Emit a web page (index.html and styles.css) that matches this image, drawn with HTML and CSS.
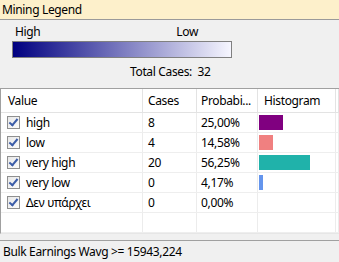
FILE: index.html
```html
<!DOCTYPE html>
<html>
<head>
  <link rel="stylesheet" href="styles.css">
</head>
<body>
  <div class="window">
    <div class="title">Mining Legend</div>

    <div class="legend">
      <div class="scale-labels">
        <span>High</span>
        <span>Low</span>
      </div>
      <div class="scale-bar"></div>
      <div class="total">Total Cases:&nbsp; 32</div>
    </div>

    <div class="grid">
      <div class="row head">
        <div class="cell c-value">Value</div>
        <div class="cell c-cases">Cases</div>
        <div class="cell c-prob">Probabi...</div>
        <div class="cell c-hist">Histogram</div>
        <div class="cell c-rest"></div>
      </div>
      <div class="row">
        <div class="cell c-value"><span class="check"></span>high</div>
        <div class="cell c-cases">8</div>
        <div class="cell c-prob">25,00%</div>
        <div class="cell c-hist"><span class="bar" style="width: 24px; background: #800080;"></span></div>
        <div class="cell c-rest"></div>
      </div>
      <div class="row">
        <div class="cell c-value"><span class="check"></span>low</div>
        <div class="cell c-cases">4</div>
        <div class="cell c-prob">14,58%</div>
        <div class="cell c-hist"><span class="bar" style="width: 14px; background: #f08080;"></span></div>
        <div class="cell c-rest"></div>
      </div>
      <div class="row">
        <div class="cell c-value"><span class="check"></span>very high</div>
        <div class="cell c-cases">20</div>
        <div class="cell c-prob">56,25%</div>
        <div class="cell c-hist"><span class="bar" style="width: 51px; background: #20b2aa;"></span></div>
        <div class="cell c-rest"></div>
      </div>
      <div class="row">
        <div class="cell c-value"><span class="check"></span>very low</div>
        <div class="cell c-cases">0</div>
        <div class="cell c-prob">4,17%</div>
        <div class="cell c-hist"><span class="bar" style="width: 4px; background: #6495ed;"></span></div>
        <div class="cell c-rest"></div>
      </div>
      <div class="row">
        <div class="cell c-value"><span class="check"></span>Δεν υπάρχει</div>
        <div class="cell c-cases">0</div>
        <div class="cell c-prob">0,00%</div>
        <div class="cell c-hist"></div>
        <div class="cell c-rest"></div>
      </div>
      <div class="row">
        <div class="cell c-value"></div>
        <div class="cell c-cases"></div>
        <div class="cell c-prob"></div>
        <div class="cell c-hist"></div>
        <div class="cell c-rest"></div>
      </div>
      <div class="row short">
        <div class="cell c-value"></div>
        <div class="cell c-cases"></div>
        <div class="cell c-prob"></div>
        <div class="cell c-hist"></div>
        <div class="cell c-rest"></div>
      </div>
    </div>

    <div class="status">Bulk Earnings Wavg &gt;= 15943,224</div>
  </div>
</body>
</html>
```

FILE: styles.css
```css
body {
  margin: 0;
  font-family: "Noto Sans", "Liberation Sans", sans-serif;
  font-size: 12px;
  letter-spacing: -0.35px;
  color: #000;
  background-color: #f0f0f0;
}

.window {
  width: 339px;
  height: 262px;
  display: flex;
  flex-direction: column;
  overflow: hidden;
}

.title {
  height: 20px;
  line-height: 19px;
  padding-left: 2px;
  background-color: #fdf0cb;
  border-bottom: 1px solid #9a9a9a;
  box-sizing: border-box;
}

.legend {
  height: 68px;
  padding: 4px 0 0 12px;
  box-sizing: border-box;
}

.scale-labels {
  display: flex;
  justify-content: space-between;
  width: 183px;
  padding-left: 3px;
  line-height: 16px;
}

.scale-bar {
  width: 218px;
  height: 15px;
  margin-top: 1px;
  border: 1px solid #808080;
  background: linear-gradient(to right, #000080, #f6f6ff);
}

.total {
  margin-top: 6px;
  padding-left: 118px;
  line-height: 16px;
}

.grid {
  height: 146px;
  background-color: #fff;
  border-top: 1px solid #a0a0a0;
  border-left: 1px solid #a0a0a0;
  border-bottom: 1px solid #e6e6e6;
  box-sizing: border-box;
  overflow: hidden;
}

.row {
  display: flex;
  height: 19px;
  border-bottom: 1px solid #eeeeee;
}

.row.head {
  height: 23px;
  border-bottom: 1px solid #e3e3e3;
}

.row.short {
  border-bottom: none;
}

.cell {
  display: flex;
  align-items: center;
  height: 100%;
  box-sizing: border-box;
  border-right: 1px solid #ececec;
  white-space: nowrap;
}

.head .cell {
  border-right-color: #e3e3e3;
}

.c-value {
  width: 142px;
  padding-left: 6px;
}

.head .c-value {
  padding-left: 7px;
}

.c-cases {
  width: 54px;
  padding-left: 5px;
}

.c-prob {
  width: 61px;
  padding-left: 4px;
}

.c-hist {
  width: 78px;
  padding-left: 1px;
}

.head .c-hist {
  padding-left: 6px;
}

.c-rest {
  flex: 1;
}

.check {
  width: 11px;
  height: 11px;
  margin-right: 6px;
  border: 1px solid #8f8f8f;
  background: linear-gradient(135deg, #e8e8e8, #fbfbfb);
  position: relative;
}

.check::after {
  content: "";
  position: absolute;
  left: 3px;
  top: 0px;
  width: 3px;
  height: 7px;
  border-right: 2px solid #3b5ca8;
  border-bottom: 2px solid #3b5ca8;
  transform: rotate(40deg);
}

.bar {
  display: block;
  height: 15px;
}

.status {
  margin-top: 6px;
  flex: 1;
  border-top: 1px solid #a0a0a0;
  padding: 3px 0 0 3px;
  line-height: 16px;
}
```
